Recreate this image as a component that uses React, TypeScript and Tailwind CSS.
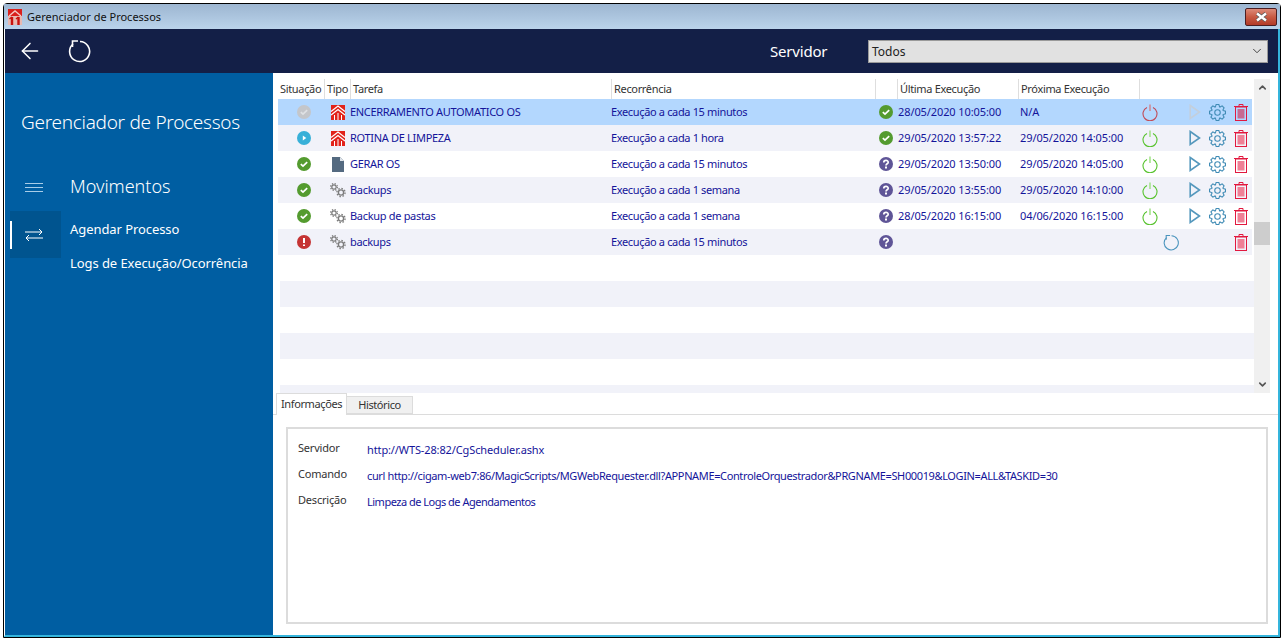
import { ArrowLeft, ChevronDown, ChevronUp } from "lucide-react";

type Row = {
  status: "disabled" | "running" | "ok" | "error";
  type: "logo" | "file" | "gears";
  name: string;
  rec: string;
  last: "ok" | "unknown";
  lastDate: string;
  next: string;
  power: "on" | "off" | "none";
  playDim?: boolean;
};

const rows: Row[] = [
  { status: "disabled", type: "logo", name: "ENCERRAMENTO AUTOMATICO OS", rec: "Execução a cada 15 minutos", last: "ok", lastDate: "28/05/2020 10:05:00", next: "N/A", power: "off", playDim: true },
  { status: "running", type: "logo", name: "ROTINA DE LIMPEZA", rec: "Execução a cada 1 hora", last: "ok", lastDate: "29/05/2020 13:57:22", next: "29/05/2020 14:05:00", power: "on" },
  { status: "ok", type: "file", name: "GERAR OS", rec: "Execução a cada 15 minutos", last: "unknown", lastDate: "29/05/2020 13:50:00", next: "29/05/2020 14:05:00", power: "on" },
  { status: "ok", type: "gears", name: "Backups", rec: "Execução a cada 1 semana", last: "unknown", lastDate: "29/05/2020 13:55:00", next: "29/05/2020 14:10:00", power: "on" },
  { status: "ok", type: "gears", name: "Backup de pastas", rec: "Execução a cada 1 semana", last: "unknown", lastDate: "28/05/2020 16:15:00", next: "04/06/2020 16:15:00", power: "on" },
  { status: "error", type: "gears", name: "backups", rec: "Execução a cada 15 minutos", last: "unknown", lastDate: "", next: "", power: "none" },
];

// outline of an 8 tooth cog, centred on 8,8
const cogPath = (() => {
  const pts: string[] = [];
  for (let i = 0; i < 8; i++) {
    const a = (i * Math.PI) / 4;
    const p = (r: number, d: number) => `${(8 + r * Math.cos(a + d)).toFixed(2)} ${(8 + r * Math.sin(a + d)).toFixed(2)}`;
    pts.push(p(5.6, -0.36), p(7.6, -0.17), p(7.6, 0.17), p(5.6, 0.36));
  }
  return "M" + pts.join(" L") + " Z";
})();

const RowLogo = () => (
  <svg width="14" height="15" viewBox="0 0 14 15">
    <rect width="14" height="15" fill="#e2231a" />
    <path d="M0 6.5 L7 1 L14 6.5" stroke="#fff" strokeWidth="1.3" fill="none" />
    <path d="M0 10 L7 4.5 L14 10" stroke="#fff" strokeWidth="1.3" fill="none" />
    <path d="M3.5 10 V15 M7 8 V15 M10.5 10 V15" stroke="#fff" strokeWidth="1" />
  </svg>
);

const TitleLogo = () => (
  <svg width="14" height="16" viewBox="0 0 14 16">
    <rect width="14" height="16" fill="#d9201c" />
    <path d="M1 7 L7 2 L13 7" stroke="#f3c9c4" strokeWidth="1.4" fill="none" />
    <rect y="7" width="14" height="9" fill="#e8b9b2" />
    <path d="M4 8 V16 M10.5 8 V16" stroke="#c8120e" strokeWidth="2.4" />
    <path d="M1.5 10 L4 8 M8 10 L10.5 8" stroke="#c8120e" strokeWidth="1.4" />
  </svg>
);

const StatusDot = ({ kind }: { kind: string }) => {
  const fill: Record<string, string> = { disabled: "#c4c6ca", running: "#38b0d8", ok: "#549b2f", error: "#c53434", unknown: "#5f5597" };
  return (
    <svg width="14" height="14" viewBox="0 0 14 14">
      <circle cx="7" cy="7" r="7" fill={fill[kind]} />
      {(kind === "ok" || kind === "disabled") && <path d="M3.8 7.2 L6 9.2 L10.2 5.2" stroke={kind === "ok" ? "#fff" : "#dfe1e4"} strokeWidth="1.7" fill="none" />}
      {kind === "running" && <path d="M5.8 4.6 L9.3 7 L5.8 9.4 Z" fill="#fff" />}
      {kind === "error" && <path d="M7 3 V8 M7 9.4 V11" stroke="#fff" strokeWidth="2" />}
      {kind === "unknown" && (
        <>
          <path d="M4.8 5.4 C4.8 2.8 9.2 2.8 9.2 5.2 C9.2 6.8 7 6.8 7 8.5" stroke="#fff" strokeWidth="1.7" fill="none" />
          <rect x="6" y="9.5" width="2" height="2" fill="#fff" />
        </>
      )}
    </svg>
  );
};

const Gears = () => (
  <svg width="18" height="16" viewBox="0 0 18 16" fill="none">
    <circle cx="5" cy="5" r="2.2" stroke="#7b7b7b" strokeWidth="1.2" />
    <circle cx="5" cy="5" r="3.4" stroke="#7b7b7b" strokeWidth="1.2" strokeDasharray="1.3 1.4" />
    <circle cx="12" cy="10.5" r="2.6" stroke="#7b7b7b" strokeWidth="1.4" />
    <circle cx="12" cy="10.5" r="4.1" stroke="#7b7b7b" strokeWidth="1.3" strokeDasharray="1.5 1.7" />
  </svg>
);

const FileIcon = () => (
  <svg width="12" height="15" viewBox="0 0 12 15">
    <path d="M0 0 H8 L12 4 V15 H0 Z" fill="#546a80" />
    <path d="M8 0 L12 4 H8 Z" fill="#dfe4ea" />
  </svg>
);

const Power = ({ color, stem }: { color: string; stem: string }) => (
  <svg width="16" height="17" viewBox="0 0 16 17" fill="none">
    <path d="M5 3.4 A7 7 0 1 0 11 3.4" stroke={color} strokeWidth="1.1" />
    <path d="M8 0.5 V7" stroke={stem} strokeWidth="1.6" />
  </svg>
);

const Play = ({ dim }: { dim?: boolean }) => (
  <svg width="12" height="16" viewBox="0 0 12 16" fill="none">
    <path d="M1.2 1.5 L10.5 8 L1.2 14.5 Z" stroke={dim ? "#c3cfdc" : "#5598bd"} strokeWidth="1.6" />
  </svg>
);

const Cog = () => (
  <svg width="17" height="17" viewBox="0 0 16 16" fill="none" stroke="#3f8bb5" strokeWidth="1">
    <path d={cogPath} />
    <circle cx="8" cy="8" r="2.6" />
  </svg>
);

const Refresh = ({ size, color, width }: { size: number; color: string; width: number }) => (
  <svg width={size} height={size} viewBox="0 0 24 24" fill="none" stroke={color} strokeWidth={width}>
    <path d="M12 2.5 A10 10 0 1 1 5 5" />
    <path d="M4.5 8 V2 H10" />
  </svg>
);

const Trash = ({ dim }: { dim?: boolean }) => (
  <svg width="14" height="17" viewBox="0 0 14 17">
    <path d="M0 2.5 H14 M5 2.5 V0.5 H9 V2.5" stroke="#e2183f" strokeWidth="1" fill="none" />
    <rect x="1.5" y="3" width="11" height="13.5" fill="none" stroke="#e2183f" />
    <rect x="3.5" y="5" width="7" height="9.5" fill={dim ? "#c76a92" : "#ef8096"} />
  </svg>
);

const App = () => {
  return (
    <div className="h-[641px] w-[1283px] overflow-hidden bg-white pl-[3px] pt-[3px] font-['Noto_Sans',sans-serif] text-[11px] text-[#333]">
      <div className="flex h-[635px] w-[1278px] flex-col rounded-t-[4px] border border-black">
        {/* Title bar */}
        <div className="flex h-[25px] shrink-0 items-center bg-gradient-to-b from-[#9db6d1] to-[#bad3eb] pl-[4px] pr-[3px]">
          <TitleLogo />
          <span className="ml-[5px] mt-[2px] text-[11px] text-[#111]">Gerenciador de Processos</span>
          <div className="ml-auto flex h-[18px] w-[32px] items-center justify-center rounded-[2px] border border-[#4b1f23] bg-gradient-to-b from-[#dc8a78] via-[#c85a43] to-[#b23a28]">
            <svg width="15" height="10" viewBox="0 0 15 10" fill="none">
              <path d="M3 1.5 L12 8.5 M12 1.5 L3 8.5" stroke="#5a5a5a" strokeWidth="4" />
              <path d="M3 1.5 L12 8.5 M12 1.5 L3 8.5" stroke="#fff" strokeWidth="2.4" />
            </svg>
          </div>
        </div>
        <div className="flex min-h-0 flex-1 flex-col border-b-2 border-l border-r-2 border-b-[#35b5dc] border-l-white border-r-[#35b5dc]">
          {/* Toolbar */}
          <div className="flex h-[44px] shrink-0 items-center bg-[#131f47] text-white">
            <ArrowLeft className="ml-[12px] h-[26px] w-[26px]" strokeWidth={1.4} />
            <div className="ml-[25px]"><Refresh size={24} color="#fff" width={1.6} /></div>
            <span className="ml-[678px] w-[59px] text-[15px] leading-none tracking-[-0.2px]">Servidor</span>
            <div className="ml-[39px] flex h-[23px] w-[400px] items-center justify-between border border-[#9a9a9a] bg-[#e1e1e1] pl-[3px] pr-[3px] text-[12px] text-[#222]">
              <span className="mt-[1px]">Todos</span>
              <ChevronDown className="h-[14px] w-[14px] text-[#444]" strokeWidth={1.7} />
            </div>
          </div>

          <div className="flex min-h-0 flex-1">
            {/* Sidebar */}
            <aside className="w-[268px] shrink-0 bg-[#005ea2] text-white">
              <h1 className="ml-[16px] mt-[36px] text-[19px] font-light leading-[26px] tracking-[-0.28px]">Gerenciador de Processos</h1>
              <div className="mt-[37px] flex h-[28px] items-center">
                <div className="ml-[20px] mt-[2px] flex w-[18px] flex-col gap-[3px]">
                  <div className="h-px bg-[#a8cde8]" />
                  <div className="h-px bg-[#a8cde8]" />
                  <div className="h-px bg-[#a8cde8]" />
                </div>
                <span className="ml-[27px] text-[18px] font-light">Movimentos</span>
              </div>
              <div className="mt-[11px] flex">
                <div className="ml-[5px] flex h-[47px] w-[51px] items-center bg-[#00548f]">
                  <div className="h-[28px] w-[2px] bg-white" />
                  <svg className="ml-[13px]" width="18" height="14" viewBox="0 0 18 14" fill="none" stroke="#fff" strokeWidth="1">
                    <path d="M0 4 H17 M14 1 L17 4 L14 7" />
                    <path d="M18 10 H1 M4 7 L1 10 L4 13" />
                  </svg>
                </div>
                <div className="ml-[9px] flex flex-col text-[13px] tracking-[-0.07px]">
                  <span className="mt-[9px] leading-[18px]">Agendar Processo</span>
                  <span className="mt-[16px] leading-[18px]">Logs de Execução/Ocorrência</span>
                </div>
              </div>
            </aside>

            {/* Main */}
            <main className="flex min-w-0 flex-1 flex-col">
              <div className="flex h-[320px] shrink-0 pl-[5px] pt-[6px]">
                <div className="w-[976px] overflow-hidden">
                  <div className="ml-[2px] grid h-[20px] w-[972px] grid-cols-[44px_26px_261px_264px_22px_121px_121px_113px] items-center text-[11px] tracking-[-0.33px]">
                    <div>Situação</div>
                    <div className="flex h-full items-center border-l border-[#dedede] pl-[2px]">Tipo</div>
                    <div className="flex h-full items-center border-l border-[#dedede] pl-[2px]">Tarefa</div>
                    <div className="flex h-full items-center border-l border-[#dedede] pl-[2px]">Recorrência</div>
                    <div className="h-full border-l border-[#dedede]" />
                    <div className="flex h-full items-center border-l border-[#dedede] pl-[2px]">Última Execução</div>
                    <div className="flex h-full items-center border-l border-[#dedede] pl-[2px]">Próxima Execução</div>
                    <div className="h-full border-l border-[#dedede]" />
                  </div>
                  {rows.map((r, i) => (
                    <div
                      key={r.name}
                      className={`grid h-[26px] w-[974px] grid-cols-[46px_26px_261px_264px_22px_121px_121px_22px_21px_24px_22px_25px_12px] items-center text-[11px] text-[#14149a] ${
                        i === 0 ? "bg-[#b3d7fe]" : i % 2 === 1 ? "bg-[#f1f2f9]" : "bg-white"
                      }`}
                    >
                      <div className="flex justify-center pl-[6px]"><StatusDot kind={r.status} /></div>
                      <div className="flex justify-center pl-[1px]">
                        {r.type === "logo" && <RowLogo />}
                        {r.type === "file" && <FileIcon />}
                        {r.type === "gears" && <Gears />}
                      </div>
                      <div className="tracking-[-0.31px]">{r.name}</div>
                      <div className="tracking-[-0.35px]">{r.rec}</div>
                      <div className="flex justify-center"><StatusDot kind={r.last} /></div>
                      <div className="pl-[1px] tracking-[-0.1px]">{r.lastDate}</div>
                      <div className="pl-[2px] tracking-[-0.1px]">{r.next}</div>
                      <div className="flex justify-center">
                        {r.power === "on" && <Power color="#56c22c" stem="#a5e28c" />}
                        {r.power === "off" && <Power color="#c24a55" stem="#cf8b96" />}
                      </div>
                      <div className="flex justify-center">
                        {r.power === "none" && <Refresh size={17} color="#4a94bd" width={1.5} />}
                      </div>
                      <div className="flex justify-center pl-[2px]">{r.power !== "none" && <Play dim={r.playDim} />}</div>
                      <div className="flex justify-center">
                        {r.power !== "none" && <Cog />}
                      </div>
                      <div className="flex justify-center"><Trash dim={i === 0} /></div>
                    </div>
                  ))}
                  <div className="ml-[2px]">
                    <div className="h-[26px] bg-white" />
                    <div className="h-[26px] bg-[#f1f2f9]" />
                    <div className="h-[26px] bg-white" />
                    <div className="h-[26px] bg-[#f1f2f9]" />
                    <div className="h-[26px] bg-white" />
                    <div className="h-[8px] bg-[#f1f2f9]" />
                  </div>
                </div>
                <div className="flex h-[314px] w-[16px] flex-col items-center bg-[#f0f0f0] text-[#555]">
                  <ChevronUp className="mt-[3px] h-[11px] w-[11px]" strokeWidth={3.5} />
                  <div className="mt-[129px] h-[23px] w-full bg-[#cdcdcd]" />
                  <ChevronDown className="mt-[134px] h-[11px] w-[11px]" strokeWidth={3.5} />
                </div>
              </div>

              {/* Tabs */}
              <div className="flex h-[22px] shrink-0 items-end border-b border-[#dcdcdc] pl-[3px]">
                <div className="z-10 -mb-px h-[22px] w-[71px] border-x border-t border-[#dcdcdc] bg-white pl-[4px] pt-[2px] leading-[15px] tracking-[-0.38px]">Informações</div>
                <div className="flex h-[18px] w-[66px] items-center justify-center border border-l-0 border-[#dcdcdc] bg-[#f0f0f0] pt-[1px] tracking-[-0.4px]">Histórico</div>
              </div>
              <div className="min-h-0 flex-1 px-[13px] pb-[11px] pt-[12px]">
                <div className="grid h-full w-[982px] grid-cols-[69px_1fr] content-start gap-y-[7px] border-2 border-[#dcdcdc] pl-[10px] pt-[11px] text-[11px]">
                  <div className="h-[18px] tracking-[-0.2px]">Servidor</div>
                  <div className="h-[19px] pt-[2px] tracking-[-0.12px] text-[#14149a]">http://WTS-28:82/CgScheduler.ashx</div>
                  <div className="h-[18px] tracking-[-0.2px]">Comando</div>
                  <div className="h-[19px] pt-[2px] tracking-[-0.37px] text-[#14149a]">curl http://cigam-web7:86/MagicScripts/MGWebRequester.dll?APPNAME=ControleOrquestrador&amp;PRGNAME=SH00019&amp;LOGIN=ALL&amp;TASKID=30</div>
                  <div className="h-[18px] tracking-[-0.2px]">Descrição</div>
                  <div className="h-[19px] pt-[2px] tracking-[-0.5px] text-[#14149a]">Limpeza de Logs de Agendamentos</div>
                </div>
              </div>
            </main>
          </div>
        </div>
      </div>
    </div>
  );
};

export default App;
